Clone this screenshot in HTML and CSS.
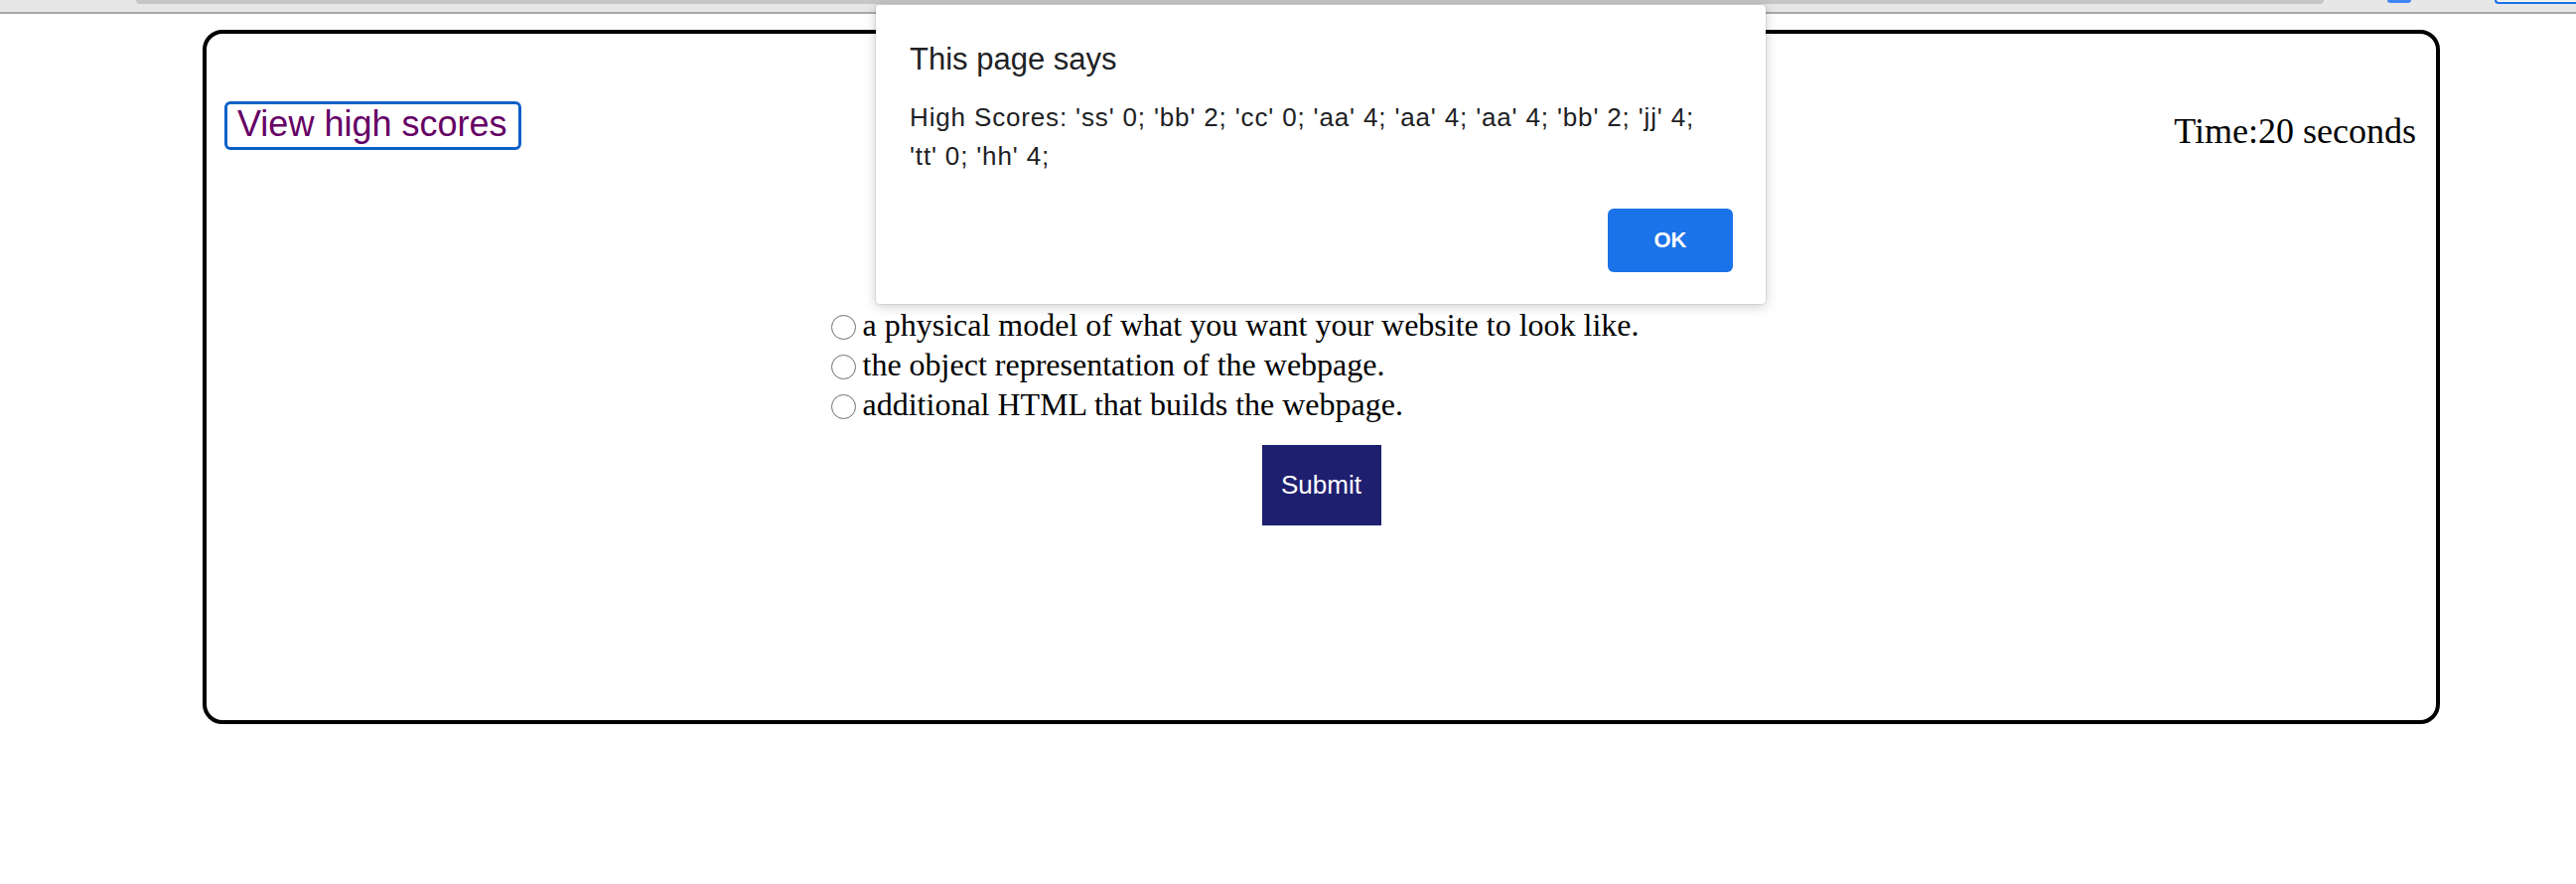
FILE: index.html
```html
<!DOCTYPE html>
<html lang="en">
<head>
<meta charset="utf-8">
<title>Quiz</title>
<link rel="stylesheet" href="styles.css">
</head>
<body>
<div class="chrome">
  <div class="address"></div>
  <div class="ext-icon"></div>
  <div class="profile"></div>
</div>

<main class="quiz">
  <header class="quiz-header">
    <button class="scores-btn" type="button">View high scores</button>
    <div class="timer">Time:20 seconds</div>
  </header>

  <form class="choices">
    <label class="choice"><input class="radio" type="radio" name="answer"><span>a physical model of what you want your website to look like.</span></label>
    <label class="choice"><input class="radio" type="radio" name="answer"><span>the object representation of the webpage.</span></label>
    <label class="choice"><input class="radio" type="radio" name="answer"><span>additional HTML that builds the webpage.</span></label>
    <button class="submit-btn" type="button">Submit</button>
  </form>
</main>

<div class="alert" role="alertdialog">
  <div class="alert-title">This page says</div>
  <div class="alert-body">High Scores: 'ss' 0; 'bb' 2; 'cc' 0; 'aa' 4; 'aa' 4; 'aa' 4; 'bb' 2; 'jj' 4; 'tt' 0; 'hh' 4;</div>
  <div class="alert-actions"><button class="ok-btn" type="button">OK</button></div>
</div>
</body>
</html>
```

FILE: styles.css
```css
* { box-sizing: border-box; }

html, body {
  margin: 0;
  padding: 0;
  background: #ffffff;
}

body {
  font-family: "Liberation Serif", "Times New Roman", serif;
  font-size: 36px;
  color: #000;
  width: 2594px;
  height: 890px;
  overflow: hidden;
}

/* browser chrome strip */
.chrome {
  height: 14px;
  background: #e7e7e7;
  border-bottom: 2px solid #a8a8a8;
  display: flex;
  align-items: flex-start;
}
.address {
  margin-left: 137px;
  width: 2203px;
  height: 4px;
  background: #c6c6c6;
  border-radius: 0 0 8px 8px;
}
.ext-icon {
  margin-left: 64px;
  width: 24px;
  height: 3px;
  background: #4285f4;
  border-radius: 0 0 3px 3px;
}
.profile {
  margin-left: 84px;
  flex: 1;
  height: 4px;
  border: 2px solid #1a73e8;
  border-top: none;
  border-right: none;
  border-radius: 0 0 0 8px;
  background: #f2f2f2;
}

/* quiz card */
.quiz {
  margin: 16px 0 0 204px;
  width: 2253px;
  height: 699px;
  border: 4px solid #000;
  border-radius: 20px;
}

.quiz-header {
  display: flex;
  justify-content: space-between;
  align-items: flex-start;
  padding: 68px 20px 0 18px;
}

.scores-btn {
  font-family: "Liberation Sans", Arial, sans-serif;
  font-size: 36px;
  line-height: 40px;
  color: #660066;
  background: #fff;
  border: 3px solid #0b60c8;
  border-radius: 6px;
  padding: 0 12px 3px 10px;
  height: 49px;
}

.timer {
  margin-top: 10px;
  line-height: 40px;
}

.choices {
  width: 988px;
  margin: 155px auto 0;
  font-size: 32px;
}

.choice {
  display: flex;
  align-items: flex-start;
  height: 40px;
  line-height: 40px;
}

.radio {
  appearance: none;
  -webkit-appearance: none;
  width: 25px;
  height: 25px;
  margin: 10px 7px 0 0;
  border: 1.5px solid #6e6e6e;
  border-radius: 50%;
  background: #fff;
  flex: none;
}

.submit-btn {
  display: block;
  margin: 21px auto 0;
  width: 120px;
  height: 81px;
  background: #1f1f70;
  color: #fff;
  border: none;
  font-family: "Liberation Sans", Arial, sans-serif;
  font-size: 26px;
  padding: 0;
}

/* alert dialog overlay */
.alert {
  position: absolute;
  left: 882px;
  top: 5px;
  width: 896px;
  height: 301px;
  background: #fff;
  border-radius: 4px;
  box-shadow: 0 2px 12px rgba(0, 0, 0, 0.22), 0 0 0 1px rgba(0, 0, 0, 0.06);
  padding: 37px 33px 32px 34px;
  font-family: "Liberation Sans", Arial, sans-serif;
  color: #202124;
}

.alert-title {
  font-size: 31px;
  line-height: 36px;
  height: 36px;
}

.alert-body {
  margin: 21px 14px 0 0;
  font-size: 26px;
  line-height: 39px;
  height: 78px;
  letter-spacing: 0.85px;
  color: #202124;
}

.alert-actions {
  margin-top: 33px;
  display: flex;
  justify-content: flex-end;
}

.ok-btn {
  width: 126px;
  height: 64px;
  background: #1a73e8;
  color: #fff;
  border: none;
  border-radius: 6px;
  font-family: "Liberation Sans", Arial, sans-serif;
  font-size: 22px;
  font-weight: bold;
  padding: 0;
}
```
